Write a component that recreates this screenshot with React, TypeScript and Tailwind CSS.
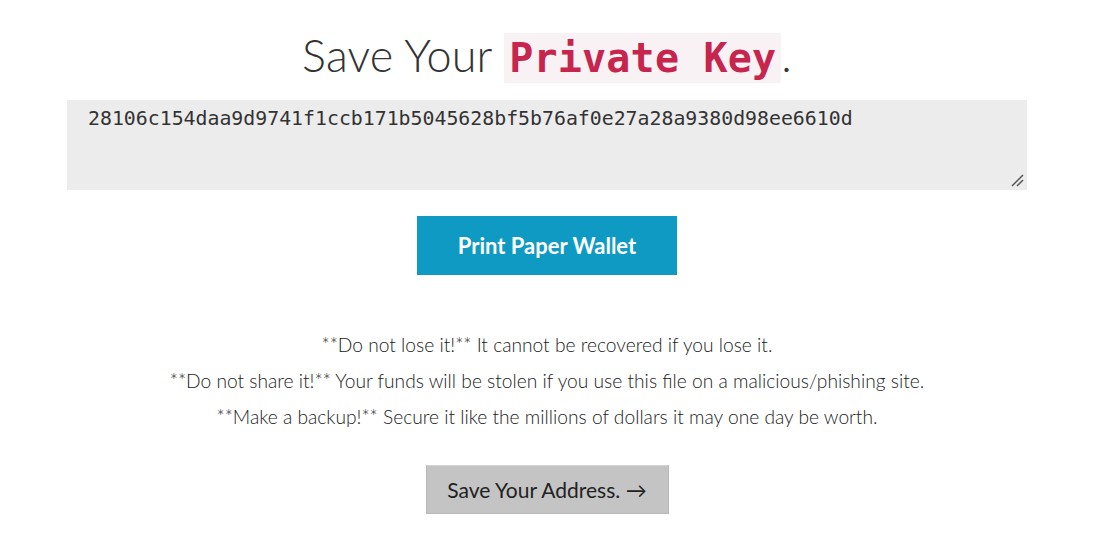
export default function App() {
  const key = "28106c154daa9d9741f1ccb171b5045628bf5b76af0e27a28a9380d98ee6610d";
  return (
    <div className="w-[1094px] h-[556px] bg-white flex flex-col items-center font-['Lato',sans-serif] text-[#333]">
      <h1 className="mt-[23px] text-[45px] leading-[64px] font-light tracking-[0.2px]">
        Save Your{" "}
        <code className="font-['DejaVu_Sans_Mono',monospace] font-bold text-[40px] text-[#c7254e] bg-[#f9f2f4] px-[5px] py-[2px]">
          Private Key
        </code>
        .
      </h1>

      <div className="relative mt-[10px] w-[960px] h-[90px]">
        <textarea
          readOnly
          defaultValue={key}
          className="w-full h-full resize-none bg-[#ececec] pl-[21px] pt-[6px] font-['DejaVu_Sans_Mono',monospace] text-[19.85px] leading-[26px] text-[#333] outline-none"
        />
        <svg className="absolute right-[3px] bottom-[3px]" width="14" height="14" viewBox="0 0 14 14">
          <path d="M2 13 L13 2 M7 13 L13 7" stroke="#555" strokeWidth="1.5" fill="none" />
        </svg>
      </div>

      <button className="mt-[26px] w-[260px] h-[59px] bg-[#0e9ac3] text-white text-[22px] font-bold">
        Print Paper Wallet
      </button>

      <div className="mt-[52px] flex flex-col items-center text-[19.2px] leading-[36px] font-light text-[#222]">
        <p>**Do not lose it!** It cannot be recovered if you lose it.</p>
        <p>**Do not share it!** Your funds will be stolen if you use this file on a malicious/phishing site.</p>
        <p>**Make a backup!** Secure it like the millions of dollars it may one day be worth.</p>
      </div>

      <button className="mt-[30px] w-[243px] h-[49px] bg-[#c4c4c4] border border-[#b8b8b8] border-t-[#d4d4d4] text-[21px] text-[#222]">
        Save Your Address. →
      </button>
    </div>
  );
}
